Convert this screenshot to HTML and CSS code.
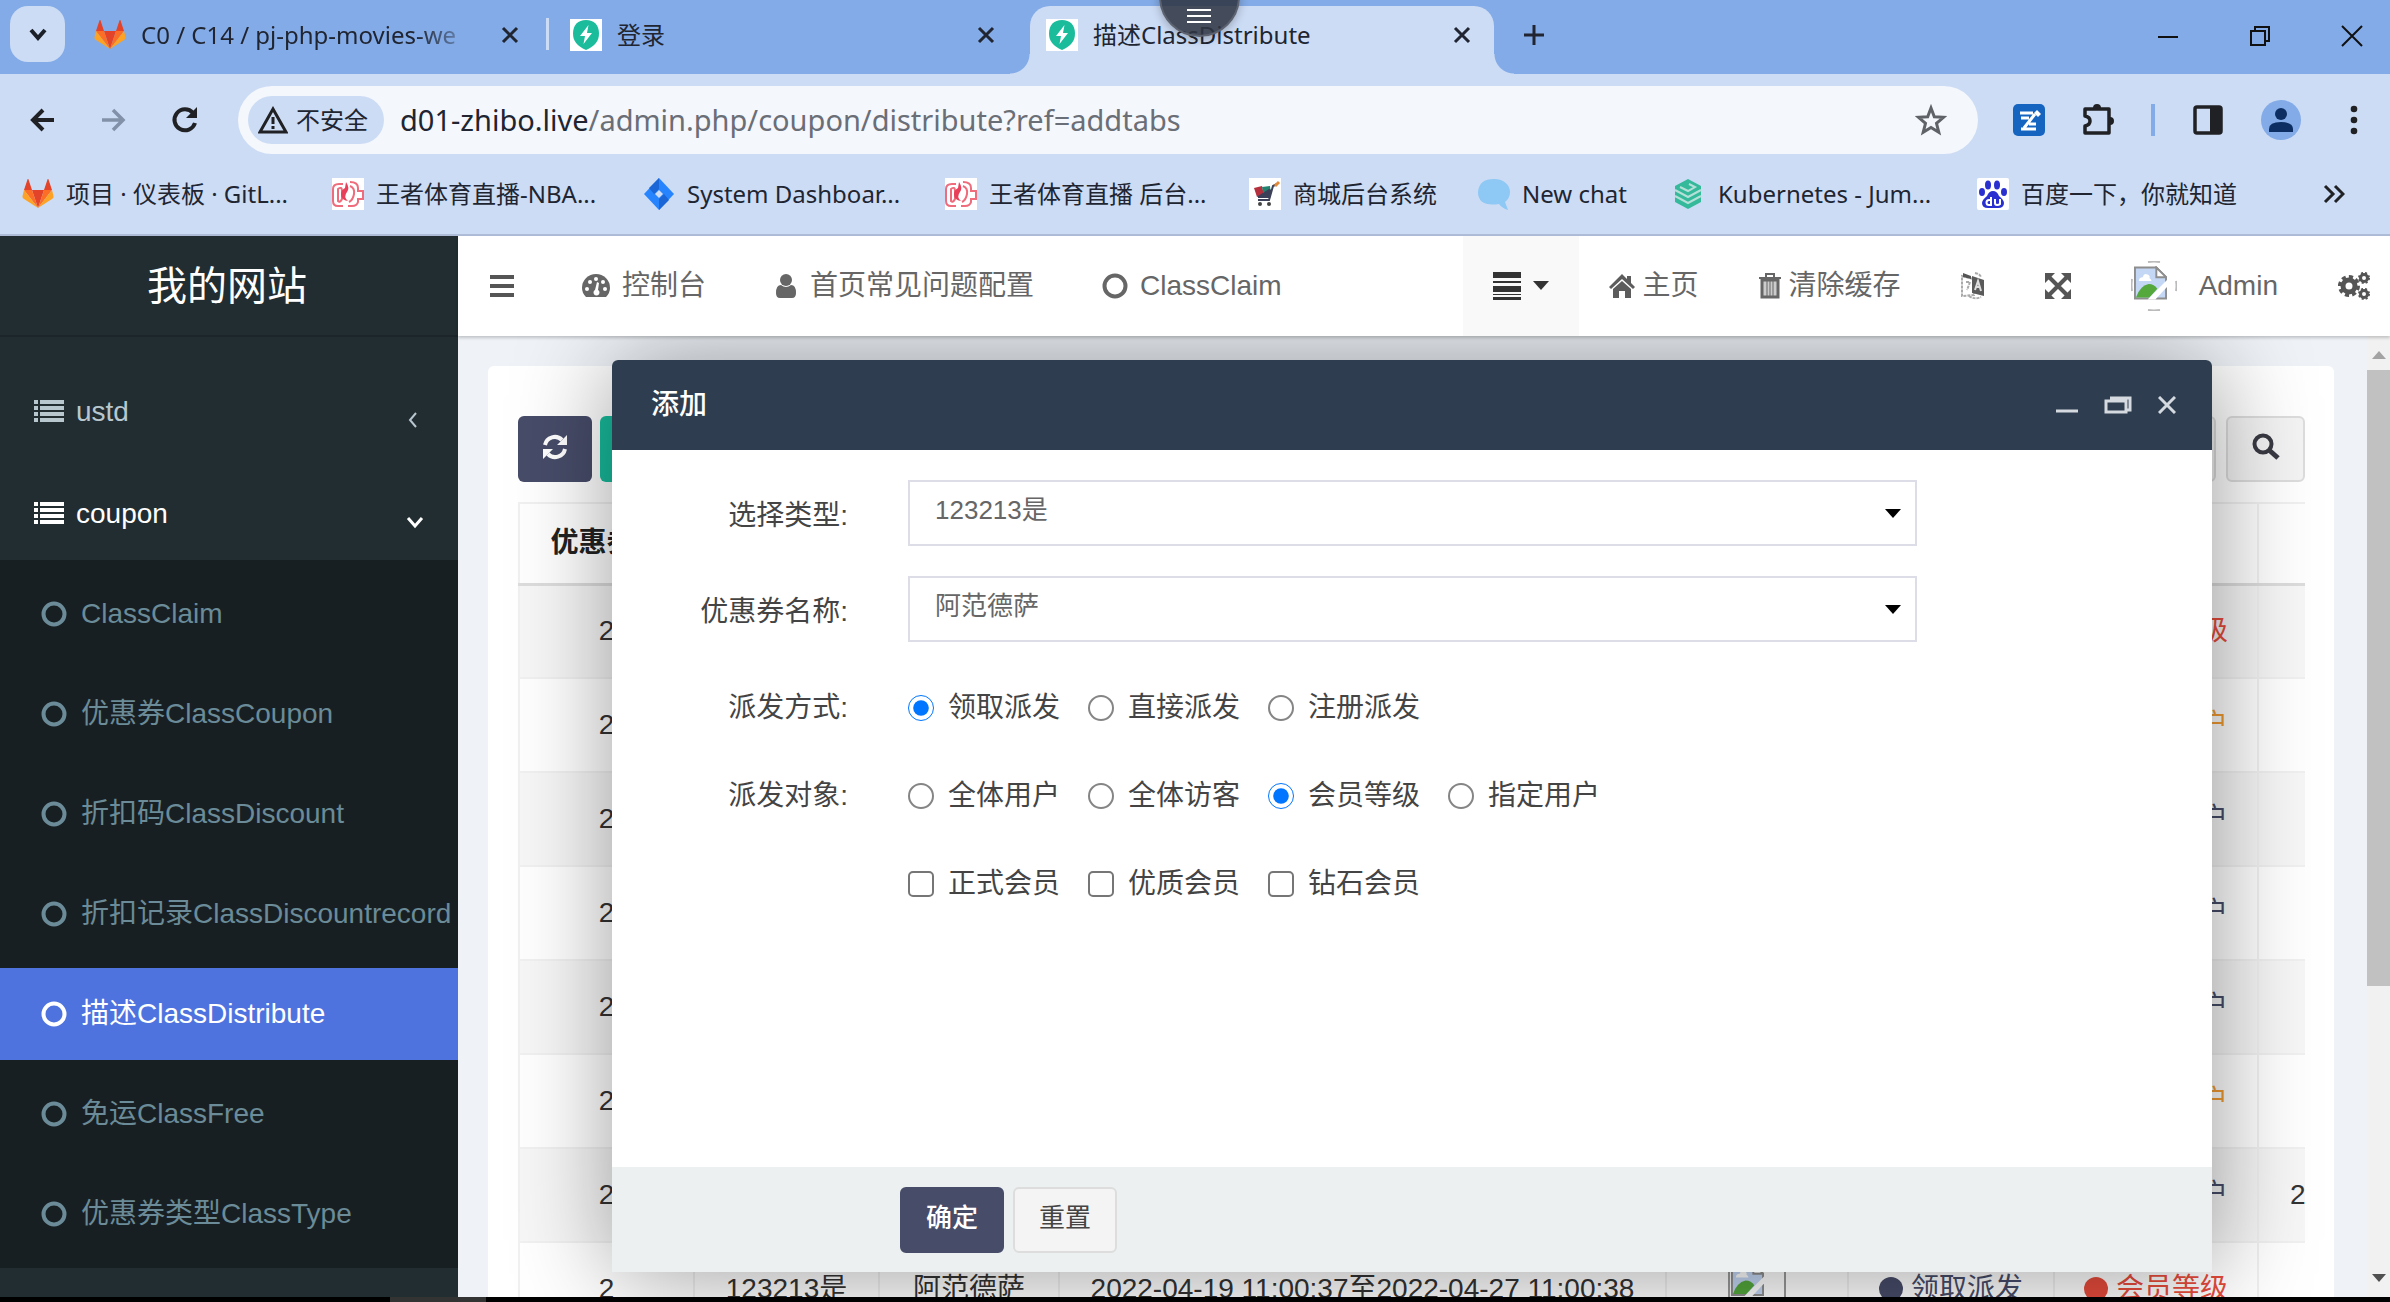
FILE: index.html
```html
<!DOCTYPE html>
<html lang="zh-CN">
<head>
<meta charset="utf-8">
<title>描述ClassDistribute</title>
<link rel="stylesheet" href="styles.css">
</head>
<body>
<svg class="sprite" aria-hidden="true">
  <defs>
    <symbol id="fox" viewBox="0 0 32 32"><path fill="#e24329" d="M16 30 22 12H10z"/><path fill="#fc6d26" d="M16 30 10 12H2z"/><path fill="#fca326" d="M2 12 0.5 18Q0 20 2 21L16 30z"/><path fill="#e24329" d="M2 12h8L6.5 1.5Q6 .5 5.500 1.500z"/><path fill="#fc6d26" d="M16 30 22 12h8z"/><path fill="#fca326" d="M30 12l1.500 6q.5 2-1.500 3L16 30z"/><path fill="#e24329" d="M30 12h-8l3.500-10.500q.5-1 1 0z"/></symbol>
    <symbol id="bolt" viewBox="0 0 32 32"><path fill="#fff" d="M0 0h32v32H0z"/><path fill="#1abc9c" d="M16 1C24 1 29 6 29 14.500 29 22 25 27 16 31 7 27 3 22 3 14.500 3 6 8 1 16 1z"/><path fill="#fff" d="M18.500 6 10 17h5l-1.500 8L22 14h-5z"/></symbol>
    <symbol id="sport" viewBox="0 0 32 32"><path fill="#fff" d="M0 0h32v32H0z"/><g fill="none" stroke="#ee6c7c" stroke-width="2"><path d="M11 6H7Q1 6 1 11v12q0 5 5 5h5"/><path d="M18 4q8 0 8 6v3h5v8h-5v3q-1 4-6 4h-4"/><path d="M18 8q5 2 4 8t-5 8M6 11q4-3 4 2v8q-2 4-4 2z"/></g><path fill="#e8405a" d="M14 4q4 6 1 10-4 5 1 9-7-1-7-7 0-4 4-6z"/></symbol>
    <symbol id="x" viewBox="0 0 20 20"><path d="M3 3l14 14M17 3 3 17" fill="none" stroke="currentColor" stroke-width="3"/></symbol>
    <symbol id="ring" viewBox="0 0 26 26"><circle cx="13" cy="13" r="10.500" fill="none" stroke="currentColor" stroke-width="4"/></symbol>
    <symbol id="list" viewBox="0 0 30 24"><path fill="currentColor" d="M0 0h4v4H0zM6 0h24v4H6zM0 6h4v4H0zM6 6h24v4H6zM0 12h4v4H0zM6 12h24v4H6zM0 18h4v4H0zM6 18h24v4H6z"/></symbol>
    <symbol id="photo" viewBox="0 0 34 34"><path fill="#c4d7f5" stroke="#8e8e8e" stroke-width="2" d="M1 1h22l10 10v22H1z"/><path fill="#fff" stroke="#8e8e8e" stroke-width="2" d="M23 1v10h10z"/><path fill="#fff" d="M5 15q0-4 4-4 1-4 4-3 4 1 3 4 2 1 2 3z"/><path fill="#54a83c" d="M2 32q4-12 13-14 6 0 9 5l-8 9z"/><path fill="#fff" d="M34 14v7L22 34h-8z"/></symbol>
  </defs>
</svg>

<header class="browser">
  <div class="tabstrip">
    <button class="tab-search" aria-label="搜索标签页"><svg width="20" height="20" viewBox="0 0 20 20"><path d="M3 6l7 8 7-8" fill="none" stroke="#1b1f27" stroke-width="4"/></svg></button>
    <div class="tab separated">
      <svg class="favicon"><use href="#fox"/></svg>
      <span class="tab-title faded">C0 / C14 / pj-php-movies-we</span>
      <button class="icon-button" aria-label="关闭"><svg width="20" height="20"><use href="#x"/></svg></button>
    </div>
    <div class="tab">
      <svg class="favicon"><use href="#bolt"/></svg>
      <span class="tab-title">登录</span>
      <button class="icon-button" aria-label="关闭"><svg width="20" height="20"><use href="#x"/></svg></button>
    </div>
    <div class="tab active">
      <svg class="favicon"><use href="#bolt"/></svg>
      <span class="tab-title">描述ClassDistribute</span>
      <button class="icon-button" aria-label="关闭"><svg width="20" height="20"><use href="#x"/></svg></button>
    </div>
    <button class="icon-button new-tab" aria-label="新标签页"><svg width="22" height="22" viewBox="0 0 22 22"><path d="M11 1v20M1 11h20" stroke="currentColor" stroke-width="3"/></svg></button>
    <div class="window-controls">
      <button class="icon-button" aria-label="最小化"><svg width="22" height="22" viewBox="0 0 22 22"><path d="M1 12h20" stroke="#111" stroke-width="2"/></svg></button>
      <button class="icon-button" aria-label="还原"><svg width="22" height="22" viewBox="0 0 22 22"><path d="M2 6h14v14H2zM6 6V2h14v14h-4" fill="none" stroke="#111" stroke-width="2"/></svg></button>
      <button class="icon-button" aria-label="关闭窗口"><svg width="22" height="22" viewBox="0 0 22 22"><path d="M1 1l20 20M21 1 1 21" stroke="#111" stroke-width="2"/></svg></button>
    </div>
  </div>

  <div class="toolbar">
    <button class="icon-button" aria-label="后退"><svg width="36" height="36" viewBox="0 0 36 36"><path d="M29 18H8M18 8 8 18l10 10" fill="none" stroke="#202124" stroke-width="4"/></svg></button>
    <button class="icon-button" aria-label="前进"><svg width="36" height="36" viewBox="0 0 36 36"><path d="M6 18h21M17 8l10 10-10 10" fill="none" stroke="#8290a8" stroke-width="3.500"/></svg></button>
    <button class="icon-button" aria-label="重新加载"><svg width="36" height="36" viewBox="0 0 36 36"><path d="M26 11A10.500 10.500 0 1 0 28 21" fill="none" stroke="#202124" stroke-width="4"/><path d="M30 5v11H19z" fill="#202124"/></svg></button>
    <div class="omnibox">
      <button class="site-chip"><svg width="30" height="28" viewBox="0 0 30 28"><path d="M15 3 28 26H2z" fill="none" stroke="#202124" stroke-width="3"/><path d="M15 11v7M15 20v3" stroke="#202124" stroke-width="3"/></svg>不安全</button>
      <span class="url"><b>d01-zhibo.live</b>/admin.php/coupon/distribute?ref=addtabs</span>
      <button class="icon-button" aria-label="收藏"><svg width="34" height="34" viewBox="0 0 34 34"><path d="M17 5l3.300 8.700 9.200.6-7 6 2.300 9L17 24.500l-7.800 4.800 2.300-9-7-6 9.200-.6z" fill="none" stroke="#5f6368" stroke-width="3"/></svg></button>
    </div>
    <button class="icon-button" aria-label="扩展"><svg width="32" height="32" viewBox="0 0 32 32"><rect width="32" height="32" rx="5" fill="#1565c0"/><path d="M7 9h13M8 14h8M16 20h7M8 25h15M22 10 11 24" fill="none" stroke="#fff" stroke-width="3"/><path d="M24 6l4 4-3 3-4-4z" fill="#fff"/></svg></button>
    <button class="icon-button" aria-label="扩展程序"><svg width="36" height="36" viewBox="0 0 36 36"><path d="M5 7h24v24H5v-7q5-1 5-5t-5-5z" fill="none" stroke="#202124" stroke-width="3.500" stroke-linejoin="round"/><path d="M13 6a4 4 0 0 1 8 0zM30 15a4 4 0 0 1 0 8z" fill="#202124"/></svg></button>
    <span class="toolbar-divider"></span>
    <button class="icon-button" aria-label="侧边栏"><svg width="36" height="36" viewBox="0 0 36 36"><rect x="5" y="5" width="26" height="26" rx="2" fill="none" stroke="#202124" stroke-width="3.500"/><path d="M20 5h11v26H20z" fill="#202124"/></svg></button>
    <button class="icon-button" aria-label="用户"><svg width="40" height="40" viewBox="0 0 40 40"><circle cx="20" cy="20" r="20" fill="#83abe7"/><circle cx="20" cy="14" r="6" fill="#0d2e63"/><path d="M8 32v-3q0-7 12-7t12 7v3z" fill="#0d2e63"/></svg></button>
    <button class="icon-button" aria-label="更多"><svg width="36" height="36" viewBox="0 0 36 36" fill="#202124"><circle cx="18" cy="7" r="3.300"/><circle cx="18" cy="18" r="3.300"/><circle cx="18" cy="29" r="3.300"/></svg></button>
  </div>

  <nav class="bookmarks">
    <a href="#"><svg class="favicon"><use href="#fox"/></svg>项目 · 仪表板 · GitL...</a>
    <a href="#"><svg class="favicon"><use href="#sport"/></svg>王者体育直播-NBA...</a>
    <a href="#"><svg class="favicon" viewBox="0 0 32 32"><path fill="#2684ff" d="M16 0 31 16 16 32 1 16z"/><path fill="#1a66d6" d="M16 0v11l-5 5-5-6zM16 32V21l5-5 5 6z"/><path fill="#cddcf5" d="M16 12l4 4-4 4-4-4z"/></svg>System Dashboar...</a>
    <a href="#"><svg class="favicon"><use href="#sport"/></svg>王者体育直播 后台...</a>
    <a href="#"><svg class="favicon" viewBox="0 0 32 32"><path fill="#fff" d="M0 0h32v32H0z"/><path fill="#b5303c" d="M5 10l8-2 2 9-7 2z"/><path fill="#20826f" d="M13 9l8-1 1 9-7 1z"/><path fill="#3c3f58" d="M20 11l3 1-2 8H9v-2z"/><path d="M28 6l-4 2-4 14H9" fill="none" stroke="#3d4258" stroke-width="2"/><path d="M30 4l-4 4" stroke="#e28a3a" stroke-width="3"/><circle cx="11" cy="26" r="2" fill="#444"/><circle cx="20" cy="26" r="2" fill="#444"/></svg>商城后台系统</a>
    <a href="#"><svg class="favicon" viewBox="0 0 32 32"><path fill="#8ec8f4" d="M16 1C26 1 32 7 32 14q0 6-5 10l3 8q-6-2-9-6-21 3-21-12Q1 1 16 1z"/></svg>New chat</a>
    <a href="#"><svg class="favicon" viewBox="0 0 32 32"><path fill="#34b99b" d="M14 1 27 8v16L14 31 1 24V8z"/><path d="M1 12l13 7 13-7M1 18l13 7 13-7M6 9l8 4 7-4-6-3" fill="none" stroke="#b4e0d8" stroke-width="2"/></svg>Kubernetes - Jum...</a>
    <a href="#"><svg class="favicon" viewBox="0 0 32 32"><rect width="32" height="32" rx="2" fill="#fff"/><g fill="#2a2fd0"><ellipse cx="11" cy="7" rx="3" ry="4.500"/><ellipse cx="20" cy="7" rx="3" ry="4.500"/><ellipse cx="5" cy="14" rx="3" ry="4"/><ellipse cx="27" cy="14" rx="3" ry="4"/><path d="M16 13q4 0 6 5 5 4 5 7 0 5-6 5H11q-6 0-6-5 0-3 5-7 2-5 6-5z"/></g><path d="M14 19v8h-2a2.500 2.500 0 0 1 0-5h2M18 21v4q0 2 2 2t3-1v-5" fill="none" stroke="#fff" stroke-width="2"/></svg>百度一下，你就知道</a>
    <button class="icon-button" aria-label="更多书签"><svg width="22" height="20" viewBox="0 0 22 20"><path d="M2 2l8 8-8 8M12 2l8 8-8 8" fill="none" stroke="#202124" stroke-width="3"/></svg></button>
  </nav>
  <button class="float-menu" aria-label="菜单"><svg width="24" height="16" viewBox="0 0 24 16"><path d="M0 2h24M0 8h24M0 14h24" stroke="#fff" stroke-width="2"/></svg></button>
</header>

<div class="app">
  <aside class="sidebar">
    <a class="brand" href="#">我的网站</a>
    <ul class="menu">
      <li><a class="menu-item" href="#"><svg width="30" height="24"><use href="#list"/></svg>ustd<svg class="chevron" width="18" height="18" viewBox="0 0 18 18"><path d="M10 2 4 9l6 7" fill="none" stroke="currentColor" stroke-width="2"/></svg></a></li>
      <li><a class="menu-item open" href="#"><svg width="30" height="24"><use href="#list"/></svg>coupon<svg class="chevron" width="18" height="18" viewBox="0 0 18 18"><path d="M2 5l7 8 7-8" fill="none" stroke="currentColor" stroke-width="3"/></svg></a></li>
    </ul>
    <ul class="submenu">
      <li><a href="#"><svg class="ring"><use href="#ring"/></svg>ClassClaim</a></li>
      <li><a href="#"><svg class="ring"><use href="#ring"/></svg>优惠券ClassCoupon</a></li>
      <li><a href="#"><svg class="ring"><use href="#ring"/></svg>折扣码ClassDiscount</a></li>
      <li><a href="#"><svg class="ring"><use href="#ring"/></svg>折扣记录ClassDiscountrecord</a></li>
      <li><a class="current" href="#"><svg class="ring"><use href="#ring"/></svg>描述ClassDistribute</a></li>
      <li><a href="#"><svg class="ring"><use href="#ring"/></svg>免运ClassFree</a></li>
      <li><a href="#"><svg class="ring"><use href="#ring"/></svg>优惠券类型ClassType</a></li>
    </ul>
  </aside>

  <div class="main">
    <nav class="navbar">
      <button class="icon-button" aria-label="折叠菜单"><svg width="24" height="24" viewBox="0 0 24 24"><path d="M0 3h24M0 12h24M0 21h24" stroke="#555" stroke-width="4"/></svg></button>
      <a class="nav-tab" href="#"><svg width="28" height="24" viewBox="0 0 28 24"><path fill="#666" d="M4 23Q0 19 0 14a14 14 0 0 1 28 0q0 5-4 9z"/><g fill="#fff"><circle cx="5" cy="15" r="2"/><circle cx="8" cy="8" r="2"/><circle cx="14" cy="5" r="2"/><circle cx="23" cy="15" r="2"/><circle cx="21" cy="8" r="2"/><path d="M15 8l2 1-1 7a3 3 0 1 1-3 0z"/></g></svg>控制台</a>
      <a class="nav-tab" href="#"><svg width="24" height="26" viewBox="0 0 24 26" fill="#666"><circle cx="12" cy="7" r="6"/><path d="M2 20q0-8 5-8 5 4 10 0 5 0 5 8 0 5-4 5H6q-4 0-4-5z"/></svg>首页常见问题配置</a>
      <a class="nav-tab" href="#"><svg class="ring"><use href="#ring"/></svg>ClassClaim</a>
      <div class="nav-right">
        <button class="nav-drop" aria-label="标签列表"><svg width="28" height="28" viewBox="0 0 28 28"><path d="M0 0h28v6H0zM0 9h28v2H0zM0 14h28v6H0zM0 22h28v1H0zM0 25h28v3H0z" fill="#333"/></svg><svg width="16" height="10" viewBox="0 0 16 10"><path d="M0 0h16L8 9z" fill="#333"/></svg></button>
        <a href="#"><svg width="26" height="24" viewBox="0 0 26 24" fill="#5c5c5c"><path d="M13 0l5 5V2h4v7l4 4-2 2L13 5 2 15l-2-2z"/><path d="M13 7l9 8v9h-6v-7h-6v7H4v-9z"/></svg>主页</a>
        <a href="#"><svg width="22" height="26" viewBox="0 0 22 26" fill="none" stroke="#666"><path d="M0 5h22M7 5V1h8v4" stroke-width="2"/><path d="M3 7h16v17H3z" fill="#ccc" stroke-width="3"/><path d="M8 8v15M11 8v15M14 8v15" stroke-width="1"/></svg>清除缓存</a>
        <a href="#" aria-label="语言"><svg width="24" height="28" viewBox="0 0 24 28"><path d="M1 4l12 3v16L1 24zM5 10h4l-3 8M8 24q5 4 12 1M14 1q5 1 6 4" fill="none" stroke="#aaa" stroke-width="2" stroke-dasharray="3 1"/><path d="M2 1l8 3v3L2 5z" fill="#555"/><path d="M11 4l12 4v16l-12-3z" fill="#5a5a5a"/><path d="M14 18l3-9 3 10M15 15h4" fill="none" stroke="#ddd" stroke-width="2"/></svg></a>
        <a href="#" aria-label="全屏"><svg width="26" height="26" viewBox="0 0 26 26"><path d="M4 4l18 18M22 4 4 22" stroke="#555" stroke-width="4"/><path d="M0 0h10L0 10zM26 0v10L16 0zM0 26V16l10 10zM26 26H16l10-10z" fill="#555"/></svg></a>
        <a href="#"><svg width="46" height="50" viewBox="0 0 46 50"><path d="M17 1q6-1 12 0M17 49q6 1 12 0M1 18q-1 6 0 12M45 20q1 5 0 10" fill="none" stroke="#bbb" stroke-width="2"/><use href="#photo" x="3" y="5" width="33" height="34"/></svg><span class="user-name">Admin</span></a>
        <a href="#" aria-label="设置"><svg width="32" height="28" viewBox="0 0 32 28" fill="none" stroke="#555"><circle cx="11" cy="14" r="6" stroke-width="5"/><circle cx="11" cy="14" r="9" stroke-width="4" stroke-dasharray="4 3"/><circle cx="26" cy="6" r="3.500" stroke-width="3"/><circle cx="26" cy="22" r="3.500" stroke-width="3"/><circle cx="26" cy="6" r="5" stroke-width="2" stroke-dasharray="2 2"/><circle cx="26" cy="22" r="5" stroke-width="2" stroke-dasharray="2 2"/></svg></a>
      </div>
    </nav>

    <div class="viewport">
      <div class="content">
        <section class="panel">
          <div class="table-tools">
            <button class="tool refresh" aria-label="刷新"><svg width="26" height="26" viewBox="0 0 26 26"><path d="M3 11A10 10 0 0 1 20 6M23 15A10 10 0 0 1 6 20" fill="none" stroke="#fff" stroke-width="4"/><path d="M25 1v10H15zM1 25V15h10z" fill="#fff"/></svg></button>
            <button class="tool add" aria-label="添加"></button>
            <button class="tool plain columns" aria-label="列"></button>
            <button class="tool plain" aria-label="搜索"><svg width="28" height="28" viewBox="0 0 28 28"><circle cx="11" cy="11" r="8.500" fill="none" stroke="#3a3a44" stroke-width="4"/><path d="M17 17l9 8" stroke="#3a3a44" stroke-width="5"/></svg></button>
          </div>
          <div class="table-wrap">
            <table>
              <colgroup><col class="c-id"><col class="c-type"><col class="c-name"><col class="c-time"><col class="c-img"><col class="c-mode"><col class="c-target"><col class="c-date"></colgroup>
              <thead><tr><th>优惠券ID</th><th></th><th></th><th></th><th></th><th></th><th></th><th></th></tr></thead>
              <tbody>
                <tr><td>2</td><td></td><td></td><td></td><td></td><td></td><td class="red"><i></i>会员等级</td><td></td></tr>
                <tr><td>2</td><td></td><td></td><td></td><td></td><td></td><td class="amber"><i></i>指定用户</td><td></td></tr>
                <tr><td>2</td><td></td><td></td><td></td><td></td><td></td><td class="dark"><i></i>全体用户</td><td></td></tr>
                <tr><td>2</td><td></td><td></td><td></td><td></td><td></td><td class="dark"><i></i>全体用户</td><td></td></tr>
                <tr><td>2</td><td></td><td></td><td></td><td></td><td></td><td class="dark"><i></i>全体用户</td><td></td></tr>
                <tr><td>2</td><td></td><td></td><td></td><td></td><td></td><td class="amber"><i></i>指定用户</td><td></td></tr>
                <tr><td>2</td><td></td><td></td><td></td><td></td><td></td><td class="dark"><i></i>全体用户</td><td class="left">2</td></tr>
                <tr><td>2</td><td>123213是</td><td>阿范德萨</td><td>2022-04-19 11:00:37至2022-04-27 11:00:38</td><td><svg class="thumb" width="58" height="58" viewBox="0 0 58 58"><path d="M1 1h56v56H1z" fill="none" stroke="#999" stroke-width="2"/><use href="#photo" x="3" y="3" width="33" height="33"/></svg></td><td class="dark"><i></i>领取派发</td><td class="red"><i></i>会员等级</td><td></td></tr>
              </tbody>
            </table>
          </div>
        </section>

        <form class="dialog" role="dialog" aria-label="添加">
          <div class="dialog-head">
            <h2>添加</h2>
            <button type="button" class="icon-button" aria-label="最小化"><svg width="22" height="18" viewBox="0 0 22 18"><path d="M0 15h22" stroke="#d5dae0" stroke-width="3"/></svg></button>
            <button type="button" class="icon-button" aria-label="还原"><svg width="28" height="18" viewBox="0 0 28 18"><path d="M2 5h20v11H2zM6 2h20v12h-3" fill="none" stroke="#d5dae0" stroke-width="3"/></svg></button>
            <button type="button" class="icon-button" aria-label="关闭"><svg width="18" height="18" viewBox="0 0 18 18"><path d="M1 1l16 16M17 1 1 17" stroke="#d5dae0" stroke-width="3"/></svg></button>
          </div>
          <div class="dialog-body">
            <div class="field">
              <label class="field-label" for="type">选择类型:</label>
              <div class="select-box"><select id="type"><option>123213是</option></select></div>
            </div>
            <div class="field">
              <label class="field-label" for="coupon">优惠券名称:</label>
              <div class="select-box"><select id="coupon"><option>阿范德萨</option></select></div>
            </div>
            <div class="choices first" role="radiogroup" aria-label="派发方式">
              <span class="field-label">派发方式:</span>
              <label><input type="radio" name="mode" checked>领取派发</label>
              <label><input type="radio" name="mode">直接派发</label>
              <label><input type="radio" name="mode">注册派发</label>
            </div>
            <div class="choices" role="radiogroup" aria-label="派发对象">
              <span class="field-label">派发对象:</span>
              <label><input type="radio" name="target">全体用户</label>
              <label><input type="radio" name="target">全体访客</label>
              <label><input type="radio" name="target" checked>会员等级</label>
              <label><input type="radio" name="target">指定用户</label>
            </div>
            <div class="choices">
              <span class="field-label"></span>
              <label><input type="checkbox">正式会员</label>
              <label><input type="checkbox">优质会员</label>
              <label><input type="checkbox">钻石会员</label>
            </div>
          </div>
          <div class="dialog-foot">
            <button type="submit" class="submit">确定</button>
            <button type="reset" class="reset">重置</button>
          </div>
        </form>
      </div>
      <div class="scrollbar">
        <svg width="14" height="10" viewBox="0 0 14 10"><path d="M7 1l7 8H0z" fill="#a3a3a3"/></svg>
        <span class="scroll-thumb"></span>
        <svg width="14" height="10" viewBox="0 0 14 10"><path d="M0 1h14L7 9z" fill="#505050"/></svg>
      </div>
    </div>
  </div>
</div>
<footer class="bottom-edge"><span></span></footer>
</body>
</html>
```
FILE: styles.css
```css
* { box-sizing: border-box; }

body {
  margin: 0;
  height: 100vh;
  display: flex;
  flex-direction: column;
  overflow: hidden;
  font: 28px/40px "Liberation Sans", "Noto Sans CJK SC", sans-serif;
  color: #333;
}

a { color: inherit; text-decoration: none; }
ul { list-style: none; margin: 0; padding: 0; }
button { font: inherit; color: inherit; cursor: pointer; }
svg { display: block; flex: none; }

.sprite { position: absolute; width: 0; height: 0; }
.favicon { width: 32px; height: 32px; }
.ring { width: 26px; height: 26px; }
.icon-button { flex: none; display: flex; align-items: center; border: 0; padding: 0; background: none; }

/* Browser frame */
.browser {
  position: relative;
  flex: none;
  background: #ccdcf5;
  border-bottom: 2px solid #aebcd8;
  font: 24px/32px "Noto Sans", "Noto Sans CJK SC", sans-serif;
  color: #202531;
}

.tabstrip {
  display: flex;
  align-items: center;
  height: 74px;
  padding: 6px 27px 0 10px;
  background: #83abe7;
}
.tab-search {
  display: grid;
  place-items: center;
  align-self: flex-start;
  width: 55px;
  height: 56px;
  margin-right: 13px;
  border: 0;
  border-radius: 18px;
  background: #ccdcf5;
}
.tab {
  position: relative;
  flex: 0 1 464px;
  display: flex;
  align-items: center;
  gap: 15px;
  height: 68px;
  margin-right: 12px;
  padding: 0 22px 10px 16px;
}
.tab-title { flex: 1; min-width: 0; overflow: hidden; white-space: nowrap; }
.faded {
  -webkit-mask-image: linear-gradient(to right, #000 80%, transparent 98%);
  mask-image: linear-gradient(to right, #000 80%, transparent 98%);
}
.separated::after {
  content: "";
  position: absolute;
  right: -7px;
  top: 12px;
  width: 3px;
  height: 32px;
  background: #ccdcf5;
}
.active { background: #ccdcf5; border-radius: 20px 20px 0 0; }
.active::before, .active::after {
  content: "";
  position: absolute;
  bottom: 0;
  width: 20px;
  height: 20px;
}
.active::before { left: -20px; background: radial-gradient(circle at 0 0, #83abe7 19px, #ccdcf5 20px); }
.active::after { right: -20px; background: radial-gradient(circle at 100% 0, #83abe7 19px, #ccdcf5 20px); }
.new-tab { margin: 0 auto 10px 17px; }
.window-controls { display: flex; gap: 70px; padding-bottom: 8px; }

.toolbar {
  display: flex;
  align-items: center;
  gap: 35px;
  height: 80px;
  padding: 12px 18px 0 25px;
}
.omnibox {
  flex: 1;
  display: flex;
  align-items: center;
  height: 68px;
  padding: 0 30px 0 10px;
  border-radius: 34px;
  background: #f4f7fc;
}
.site-chip {
  display: flex;
  align-items: center;
  gap: 8px;
  height: 48px;
  padding: 0 16px 0 10px;
  border: 0;
  border-radius: 24px;
  background: #ccdcf5;
}
.url { flex: 1; margin-left: 16px; font-size: 29px; color: #6a6e76; white-space: nowrap; }
.url b { font-weight: 400; color: #202531; }
.toolbar-divider { width: 4px; height: 32px; background: #83abe7; }

.bookmarks {
  display: grid;
  grid-template-columns: 310px 311px 302px 304px 229px 196px 303px 1fr auto;
  align-items: center;
  height: 80px;
  padding: 0 45px 0 22px;
}
.bookmarks a { display: flex; align-items: center; gap: 12px; white-space: nowrap; }

.float-menu {
  position: absolute;
  top: -44px;
  left: calc(50% - 36px);
  width: 81px;
  height: 81px;
  padding: 46px 0 0 26px;
  border: 2px solid #5c6270;
  border-radius: 50%;
  background: #2f3442dd;
  box-shadow: 0 2px 10px #0004;
}
.float-menu svg { margin-top: -8px; }

/* Admin shell */
.app { flex: 1; min-height: 0; display: flex; }

.sidebar { flex: none; width: 458px; background: #222d32; color: #b8c7ce; }
.brand {
  display: grid;
  place-items: center;
  height: 101px;
  border-bottom: 2px solid #1c2529;
  padding-right: 4px;
  font-size: 40px;
  color: #fff;
}
.menu { display: grid; gap: 10px; padding-top: 29px; }
.menu-item { display: flex; align-items: center; gap: 12px; height: 92px; padding: 0 34px; }
.open { color: #fff; }
.chevron { margin: 16px 0 0 auto; }
.submenu { display: grid; gap: 8px; padding: 8px 0; background: #181f23; color: #6a8b97; }
.submenu a { display: flex; align-items: center; gap: 14px; height: 92px; padding-left: 41px; white-space: nowrap; }
.submenu .current { background: #4e73df; color: #fff; }

.main { flex: 1; min-width: 0; display: flex; flex-direction: column; }
.navbar {
  position: relative;
  z-index: 2;
  flex: none;
  display: flex;
  height: 100px;
  padding-left: 32px;
  background: #fff;
  box-shadow: 0 2px 3px #0003;
  color: #666;
}
.nav-tab { display: flex; align-items: center; gap: 12px; margin-left: 68px; white-space: nowrap; }
.nav-right { display: flex; margin-left: auto; padding-right: 20px; }
.nav-right a { display: flex; align-items: center; gap: 8px; padding: 0 30px; white-space: nowrap; }
.nav-right a:last-child { padding-right: 0; }
.user-name { margin-left: 14px; }
.nav-drop {
  display: flex;
  align-items: center;
  gap: 12px;
  padding: 0 30px;
  border: 0;
  background: #f9f9f9;
}

.viewport { flex: 1; min-height: 0; display: flex; }
.content { position: relative; flex: 1; min-width: 0; overflow: hidden; padding: 30px 33px 0 30px; background: #eff3f8; }

.panel { height: 1000px; padding: 50px 29px 0 30px; border-radius: 6px; background: #fff; }
.table-tools { display: flex; gap: 8px; }
.tool {
  display: grid;
  place-items: center;
  width: 74px;
  height: 66px;
  padding: 0 0 4px;
  border: 0;
  border-radius: 6px;
  color: #fff;
}
.refresh { background: #474c69; }
.add { width: 120px; background: #18bc9c; }
.plain { width: 79px; border: 2px solid #ddd; background: #f4f4f4; }
.columns { margin-left: auto; margin-right: 2px; }

.table-wrap { overflow: hidden; margin-top: 20px; }
table { width: 2419px; table-layout: fixed; border-collapse: collapse; color: #333; }
.c-id { width: 175px; }
.c-type { width: 185px; }
.c-name { width: 180px; }
.c-time { width: 607px; }
.c-img { width: 182px; }
.c-mode { width: 206px; }
.c-target { width: 204px; }
.c-date { width: 680px; }
th, td { border: 2px solid #f1f1f1; padding: 0; text-align: center; white-space: nowrap; }
th { height: 81px; border-bottom: 3px solid #ddd; color: #222; }
td { height: 94px; }
tbody tr:nth-child(odd) { background: #f7f7f7; }
td i { display: inline-block; width: 24px; height: 24px; margin-right: 8px; border-radius: 50%; background: currentColor; vertical-align: -3px; }
.thumb { margin: 0 auto; }
td.left { text-align: left; padding-left: 31px; }
.dark { color: #474c69; }
.red { color: #e74c3c; }
.amber { color: #f39c32; }

/* Dialog window */
.dialog {
  position: absolute;
  top: 24px;
  left: 154px;
  right: 155px;
  border-radius: 6px;
  background: #fff;
  box-shadow: 2px 2px 100px #0006;
  color: #444;
}
.dialog-head {
  display: flex;
  align-items: center;
  gap: 26px;
  height: 90px;
  padding: 0 36px 0 39px;
  border-radius: 6px 6px 0 0;
  background: #2e3e50;
}
.dialog-head h2 { flex: 1; margin: 0; font-size: 28px; font-weight: 500; color: #fff; }
.dialog-body { height: 717px; padding-top: 30px; }
.field { display: flex; align-items: center; gap: 60px; margin-bottom: 30px; }
.field-label { flex: none; width: 236px; text-align: right; padding-top: 6px; }
.select-box { position: relative; width: 1009px; }
.select-box::after {
  content: "";
  position: absolute;
  right: 16px;
  top: 29px;
  border: 8px solid transparent;
  border-top: 9px solid #000;
  border-bottom: 0;
  pointer-events: none;
}
select {
  appearance: none;
  display: block;
  width: 100%;
  height: 66px;
  padding: 0 25px 6px;
  border: 2px solid #dcdde6;
  border-radius: 0;
  background: #fff;
  font: 26px/40px "Liberation Sans", "Noto Sans CJK SC", sans-serif;
  color: #666;
}
.choices { display: flex; align-items: center; height: 88px; }
.choices.first { margin-top: -8px; }
.choices .field-label { margin-right: 60px; padding-top: 0; }
.choices label { display: flex; align-items: center; gap: 14px; width: 180px; white-space: nowrap; }
input { width: 26px; height: 26px; margin: 0; accent-color: #0075ff; }
input[type="checkbox"]:not(:checked) {
  appearance: none;
  border: 2px solid #767676;
  border-radius: 5px;
  background: #fff;
}
input[type="radio"]:not(:checked) {
  appearance: none;
  border: 2px solid #858585;
  border-radius: 50%;
  background: #fff;
}
.dialog-foot { display: flex; gap: 9px; height: 105px; padding: 20px 288px; background: #ecf0f1; }
.dialog-foot button {
  width: 104px;
  height: 66px;
  padding: 0 0 4px;
  border: 2px solid #ddd;
  border-radius: 6px;
  background: #f4f4f4;
  font-size: 26px;
  color: #444;
}
.dialog-foot .submit { border-color: #474c69; background: #474c69; color: #fff; font-weight: 500; }

.scrollbar {
  flex: none;
  display: flex;
  flex-direction: column;
  align-items: center;
  width: 23px;
  padding: 14px 0;
  background: #f1f1f1;
}
.scroll-thumb { flex: 0 0 66%; width: 23px; margin: 10px 0 auto; background: #c1c1c1; }

.bottom-edge { flex: none; display: flex; height: 5px; padding-left: 390px; background: #000; }
.bottom-edge span { width: 96px; background: #333; }
```
